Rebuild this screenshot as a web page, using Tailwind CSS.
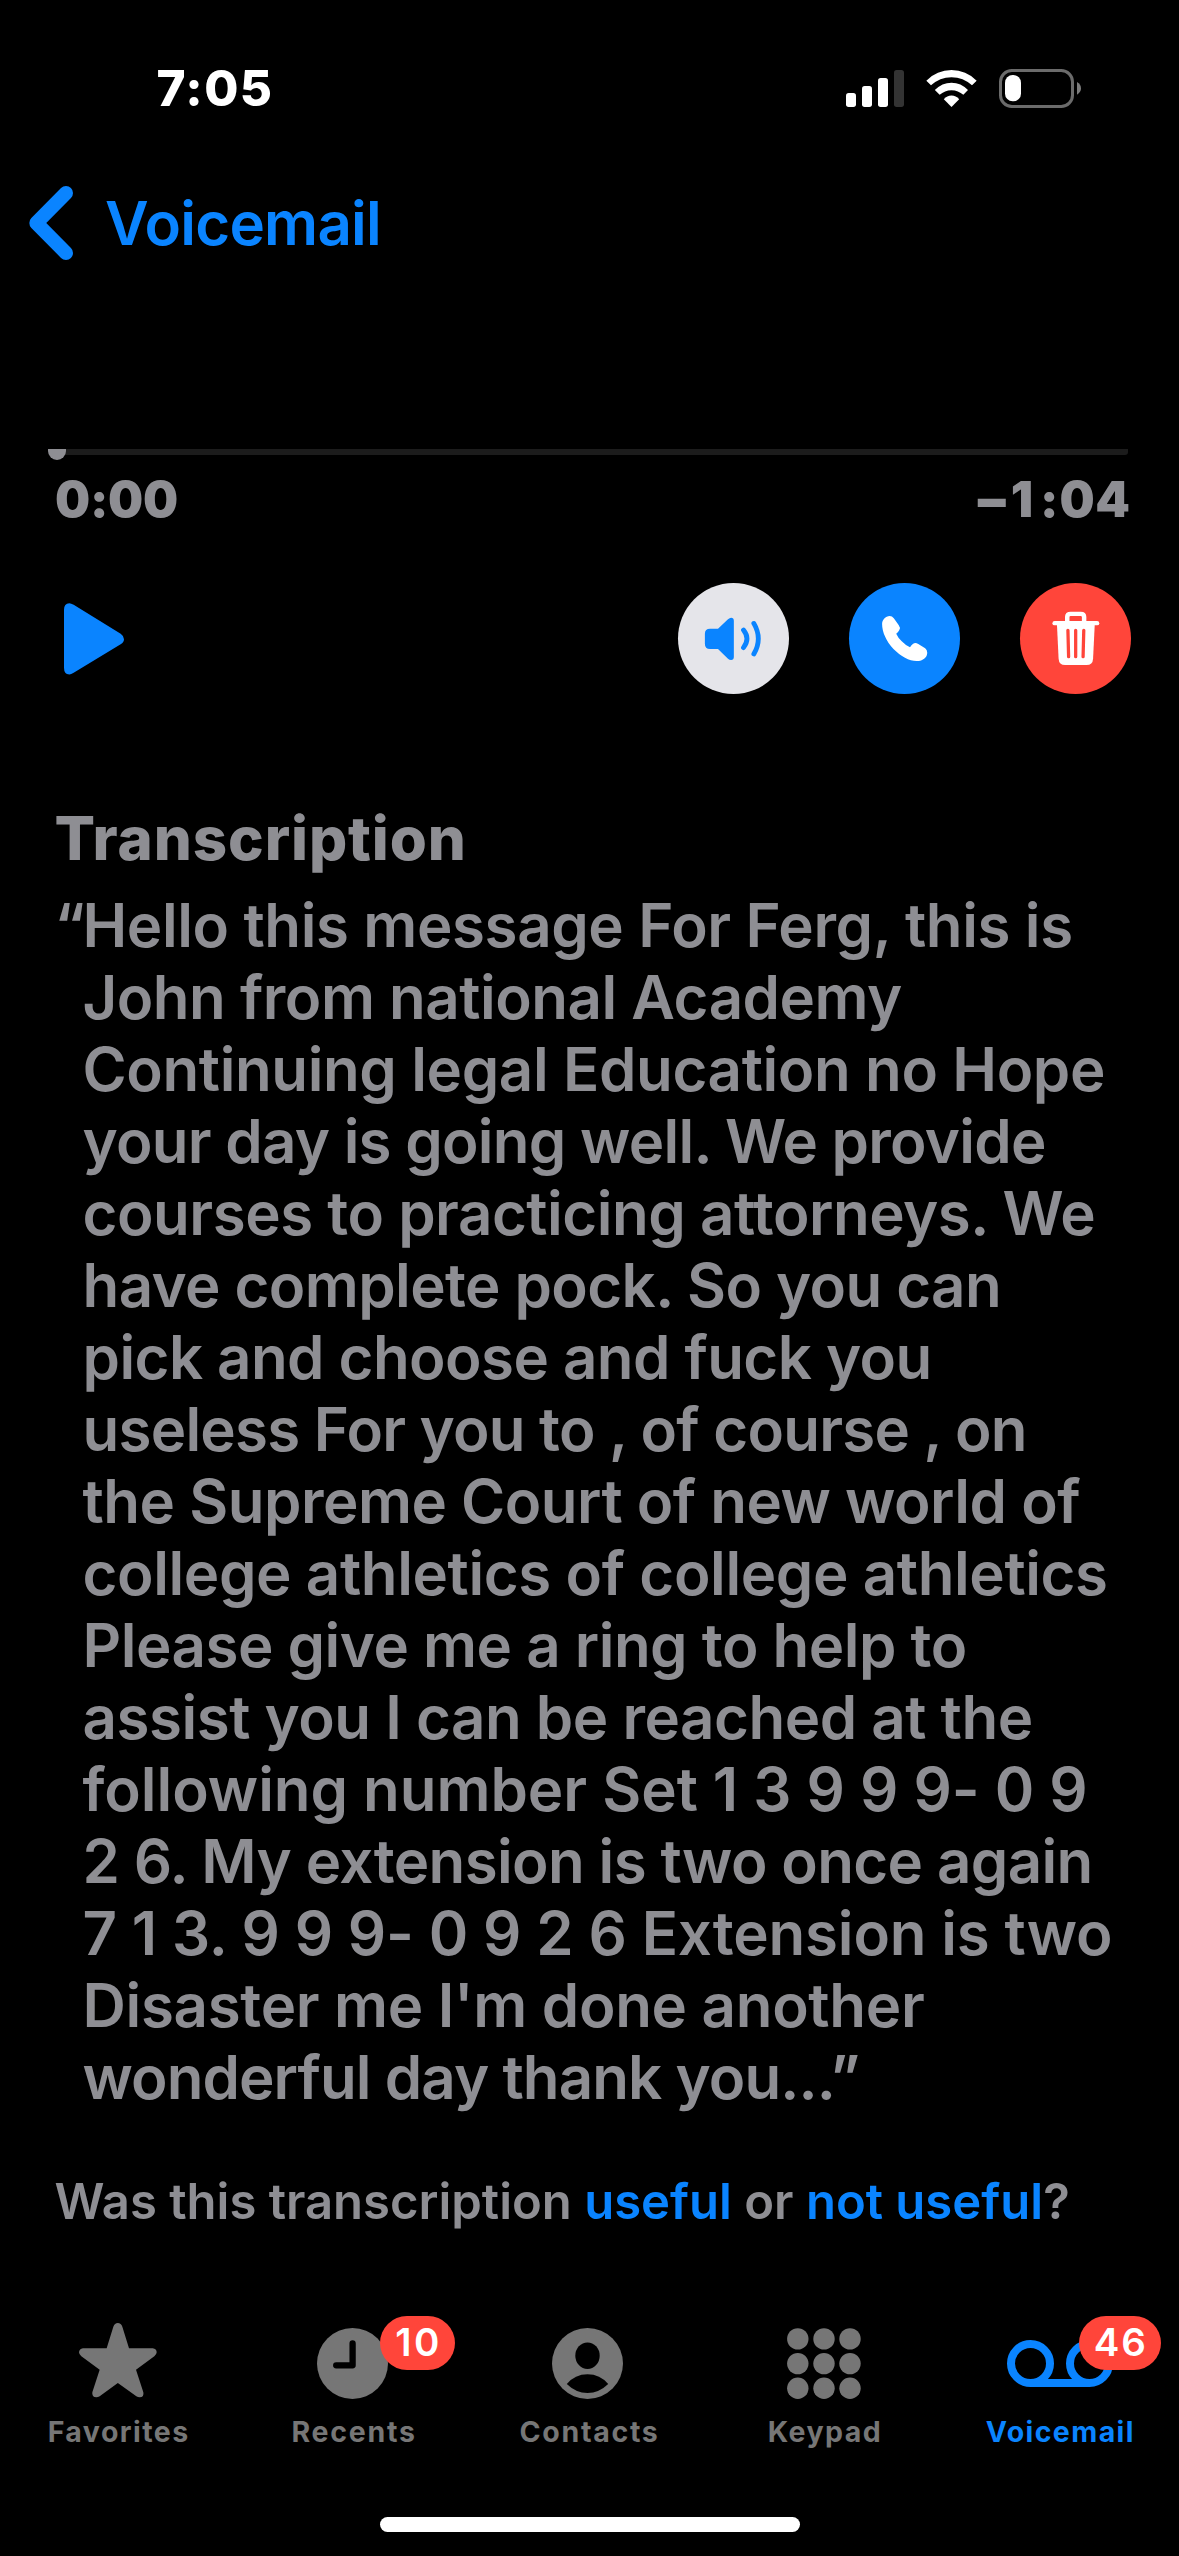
<!DOCTYPE html>
<html lang="en">
<head>
<meta charset="utf-8">
<title>Voicemail</title>
<script src="https://cdn.jsdelivr.net/npm/@tailwindcss/browser@4"></script>
</head>
<body class="bg-black">
<div class="flex h-[2556px] w-[1179px] flex-col overflow-hidden bg-black font-['Inter',sans-serif] text-[#8e8e93]">

  <!-- Status bar -->
  <header class="flex h-[176px] shrink-0 items-center justify-between pr-[98px] pl-[156.500px]">
    <span class="text-[49.5px] leading-[60px] font-extrabold tracking-[1.4px] text-white">7:05</span>
    <div class="flex items-center gap-[22px]">
      <svg class="h-[39px] w-[58px]" viewBox="138 84 174 117">
        <g fill="#fff"><rect x="138" y="156" width="30" height="42" rx="8"/><rect x="186" y="135" width="30" height="63" rx="8"/><rect x="234" y="111" width="30" height="87" rx="8"/></g>
        <rect x="282" y="87" width="30" height="111" rx="8" fill="#333"/>
      </svg>
      <svg class="h-[39px] w-[51px]" viewBox="378 84 153 117" fill="#fff">
        <path d="M379 119Q411 87 454.500 87Q498 87 530 119L516 133Q490 108.500 454.500 108.500Q419 108.500 393 133Z"/>
        <path d="M404.500 147Q426 125 454.500 125Q483 125 504 147L490 161.500Q475 147.500 454.500 147.500Q434 147.500 419 161.500Z"/>
        <path d="M431.500 174.500Q441 163.500 454.500 163.500Q468 163.500 477.500 174.500L454.500 198Z"/>
      </svg>
      <svg class="h-[39px] w-[82px]" viewBox="597 84 246 117">
        <rect x="601.500" y="88.500" width="216" height="108" rx="34" fill="none" stroke="#6b6b6b" stroke-width="9"/>
        <rect x="615" y="102" width="48" height="79" rx="23" fill="#fff"/>
        <path d="M831 123Q843 130 843 142Q843 154 831 161Z" fill="#7c7c7c"/>
      </svg>
    </div>
  </header>

  <!-- Navigation -->
  <nav class="flex h-[94px] shrink-0 items-center gap-[32px] pl-[29px] text-[#0a84ff]">
    <svg class="h-[74px] w-[44px]" viewBox="87 439 132 222" fill="none" stroke="currentColor" stroke-width="42" stroke-linecap="round" stroke-linejoin="round"><path d="M198 460L109 550L198 640"/></svg>
    <span class="text-[60px] leading-[72px] font-semibold tracking-[-0.75px]">Voicemail</span>
  </nav>

  <!-- Playback -->
  <section class="mt-[179px] shrink-0">
    <div class="relative mr-[51px] ml-[57px] h-[6px] rounded-b-[3px] bg-[#1c1c1c]">
      <div class="absolute top-0 -left-[9px] h-[11px] w-[18px] rounded-b-[9px] bg-[#8e8e93]"></div>
    </div>
    <div class="mt-[9px] flex justify-between pr-[49px] pl-[55px] text-[49.5px] leading-[70px] font-black">
      <span class="tracking-[-0.3px]">0:00</span>
      <span class="flex"><span class="mr-[5px] text-[56px]">–</span><span class="tracking-[7px]">1</span><span class="tracking-[1px]">:</span><span class="tracking-[0.5px]">0</span><span>4</span></span>
    </div>
    <div class="mt-[49px] flex items-center pr-[48px] pl-[64px]">
      <svg class="mr-auto h-[72px] w-[60px]" viewBox="192 547.500 180 216" fill="#0a84ff"><path d="M192 568Q192 548 208 548Q213 548 221 553L362 640Q372 647 372 656Q372 665 362 671L221 757Q213 762 208 762Q192 762 192 742Z"/></svg>
      <div class="flex gap-[60px]">
        <svg class="size-[111px] rounded-full bg-[#e5e5ea]" viewBox="111 489 322 333" preserveAspectRatio="none">
          <path d="M204 626H227L256 598Q261 593 265 593Q273 593 273 602V711Q273 720 265 720Q260 720 256 716L227 687H204Q189 687 189 672V641Q189 626 204 626Z" fill="#0a84ff"/>
          <path d="M301 630Q321 656 301 683M331 610Q357 656 331 702" fill="none" stroke="#0a84ff" stroke-width="14" stroke-linecap="round"/>
        </svg>
        <svg class="size-[111px] rounded-full bg-[#0a84ff]" viewBox="608 489 322 333" preserveAspectRatio="none">
          <path d="M704 612C704 600 714 588 726 588Q733 588 738 595L752 615Q758 623 754 630Q751 636 745 641Q750 653 761 664Q772 676 785 682Q789 674 794 671Q801 667 809 672L829 685Q835 690 835 698C835 711 824 723 804 723C783 723 758 709 737 687C716 664 704 636 704 612Z" fill="#fff"/>
        </svg>
        <svg class="size-[111px] rounded-full bg-[#ff453a]" viewBox="1105 489 322 333" preserveAspectRatio="none">
          <path d="M1242 608V591Q1242 581.500 1252 581.500H1281Q1291 581.500 1291 591V608" fill="none" stroke="#fff" stroke-width="13"/>
          <rect x="1199" y="603" width="136" height="13" rx="6.500" fill="#fff"/>
          <path d="M1212 610H1322L1317 716Q1316 735 1298 735H1236Q1218 735 1217 716Z" fill="#fff"/>
          <path d="M1244 631L1246 710M1266.500 631V710M1290 631L1288 710" stroke="#ff453a" stroke-width="9.500" stroke-linecap="round"/>
        </svg>
      </div>
    </div>
  </section>

  <!-- Transcription -->
  <section class="mt-[108px] shrink-0 pl-[54.500px]">
    <h1 class="text-[60px] leading-[72px] font-extrabold tracking-[0.9px]">Transcription</h1>
    <div class="mt-[15px] grid grid-cols-[28px_1fr] text-[60px] leading-[72px] font-semibold whitespace-nowrap">
      <span>“</span>
      <p>
        <span class="block tracking-[-0.39px]">Hello this message For Ferg, this is</span>
        <span class="block tracking-[-0.48px]">John from national Academy</span>
        <span class="block tracking-[-0.37px]">Continuing legal Education no Hope</span>
        <span class="block tracking-[-0.73px]">your day is going well. We provide</span>
        <span class="block tracking-[-0.47px]">courses to practicing attorneys. We</span>
        <span class="block tracking-[-0.59px]">have complete pock. So you can</span>
        <span class="block tracking-[-0.56px]">pick and choose and fuck you</span>
        <span class="block tracking-[-0.76px]">useless For you to , of course , on</span>
        <span class="block tracking-[-0.49px]">the Supreme Court of new world of</span>
        <span class="block tracking-[-0.39px]">college athletics of college athletics</span>
        <span class="block tracking-[-0.49px]">Please give me a ring to help to</span>
        <span class="block tracking-[-0.48px]">assist you I can be reached at the</span>
        <span class="block tracking-[-0.03px]">following number Set 1 3 9 9 9- 0 9</span>
        <span class="block tracking-[-0.63px]">2 6. My extension is two once again</span>
        <span class="block tracking-[-0.16px]">7 1 3. 9 9 9- 0 9 2 6 Extension is two</span>
        <span class="block tracking-[-0.31px]">Disaster me I'm done another</span>
        <span class="block tracking-[-0.91px]">wonderful day thank you...”</span>
      </p>
    </div>
    <p class="mt-[53px] text-[49px] leading-[72px] font-semibold whitespace-nowrap">Was this transcription <a class="text-[#0a84ff]">useful</a> or <a class="text-[#0a84ff]">not useful</a>?</p>
  </section>

  <!-- Tab bar -->
  <nav class="mt-[78px] grid h-[201px] shrink-0 grid-cols-5 pr-[2px] text-[28.5px] leading-[37px] font-bold text-[#767676]">
    <div class="flex flex-col items-center">
      <div class="flex h-[97px] items-start pt-[7px]">
        <svg class="h-[75px] w-[78px]" viewBox="235 129 234 225" fill="currentColor"><path d="M318 205L338 140Q342 129 351.500 129Q361 129 365 140L385 205H456Q468 207 468 217Q468 223 461 229L406 269L428 337Q431 352 417 352Q412 352 407 349L351.500 309L297 349Q292 352 287 352Q273 352 275 337L297 269L242 229Q235 223 235 217Q236 207 247 205Z"/></svg>
      </div>
      <span class="-mr-[2px] tracking-[1.45px]">Favorites</span>
    </div>
    <div class="flex flex-col items-center">
      <div class="relative mr-px flex h-[97px] items-start pt-[12px]">
        <svg class="size-[71px]" viewBox="0 0 71 71"><circle cx="35.500" cy="35.500" r="35.500" fill="currentColor"/><path d="M19.200 37.300H35.600V15.500" fill="none" stroke="#000" stroke-width="6.300" stroke-linecap="round" stroke-linejoin="round"/></svg>
        <span class="absolute top-0 left-[63px] flex h-[54px] w-[75px] items-center justify-center rounded-full bg-[#ff453a] pb-px pl-[2px] text-[38.500px] font-semibold tracking-[2.5px] text-white">10</span>
      </div>
      <span class="-mr-[2px] tracking-[1.75px]">Recents</span>
    </div>
    <div class="flex flex-col items-center">
      <div class="mr-px flex h-[97px] items-start pt-[12px]">
        <svg class="size-[71px]" viewBox="0 0 71 71"><circle cx="35.500" cy="35.500" r="35.500" fill="currentColor"/><ellipse cx="35.500" cy="27.700" rx="12.200" ry="13.300" fill="#000"/><path d="M14.800 56Q23 46.300 35.500 46.300Q48 46.300 56.200 56Q47 65 35.500 65Q24 65 14.800 56Z" fill="#000"/></svg>
      </div>
      <span class="-mr-[2px] tracking-[1.7px]">Contacts</span>
    </div>
    <div class="flex flex-col items-center">
      <div class="flex h-[97px] items-start pt-[12px]">
        <svg class="h-[71px] w-[74px]" viewBox="0 0 74 71" fill="currentColor"><circle cx="10.800" cy="10.900" r="10.700"/><circle cx="37" cy="10.900" r="10.700"/><circle cx="63" cy="10.900" r="10.700"/><circle cx="10.800" cy="35.600" r="10.700"/><circle cx="37" cy="35.600" r="10.700"/><circle cx="63" cy="35.600" r="10.700"/><circle cx="10.800" cy="60.300" r="10.700"/><circle cx="37" cy="60.300" r="10.700"/><circle cx="63" cy="60.300" r="10.700"/></svg>
      </div>
      <span class="-mr-[2px] tracking-[1.45px]">Keypad</span>
    </div>
    <div class="flex flex-col items-center text-[#0a84ff]">
      <div class="relative ml-px flex h-[97px] items-start pt-[24px]">
        <svg class="h-[47px] w-[106px]" viewBox="0 0 106 47" fill="none" stroke="currentColor" stroke-width="8"><circle cx="23.500" cy="23.500" r="19.500"/><circle cx="82.500" cy="23.500" r="19.500"/><path d="M23.500 43H82.500"/></svg>
        <span class="absolute top-0 left-[72px] flex h-[54px] w-[82px] items-center justify-center rounded-full bg-[#ff453a] pb-px pl-[2px] text-[38.500px] font-semibold tracking-[2px] text-white">46</span>
      </div>
      <span class="-mr-[2px] tracking-[1.4px]">Voicemail</span>
    </div>
  </nav>

  <!-- Home indicator -->
  <div class="mx-auto h-[15px] w-[420px] shrink-0 rounded-full bg-white"></div>
</div>
</body>
</html>
